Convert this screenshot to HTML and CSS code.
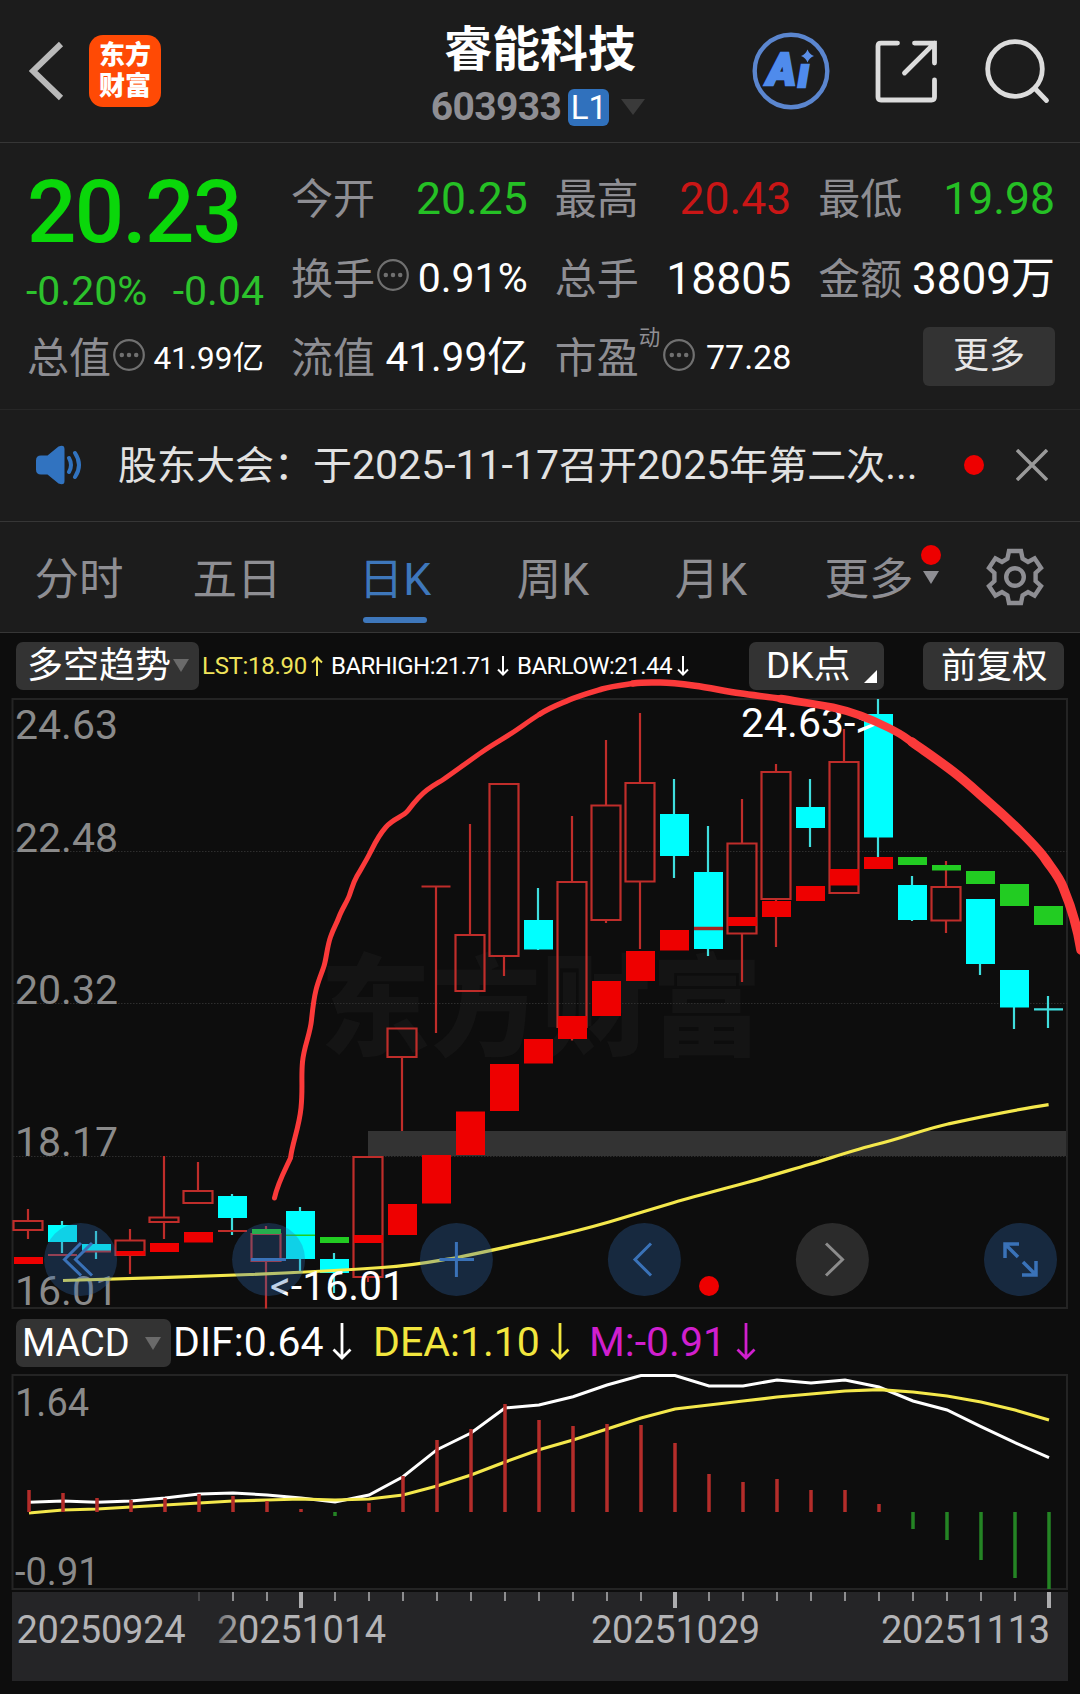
FILE: index.html
```html
<!DOCTYPE html>
<html lang="zh-CN">
<head>
<meta charset="utf-8">
<title>睿能科技 603933</title>
<link rel="stylesheet" href="styles.css">
</head>
<body>
<header class="header">
  <div class="header-left">
    <svg class="back" width="36" height="60" viewBox="0 0 36 60"><path d="M32 3 4 30 32 57"/></svg>
    <div class="logo"><span>东方</span><span>财富</span></div>
  </div>
  <div class="header-title">
    <h1>睿能科技</h1>
    <div class="code-row"><span class="code">603933</span><span class="level">L1</span><svg width="24" height="16" viewBox="0 0 24 16"><path d="M0 0h24L12 16z" fill="#3a3a3a"/></svg></div>
  </div>
  <div class="header-right">
    <svg width="78" height="82" viewBox="752 30 78 82">
      <circle cx="791" cy="71" r="36.300" fill="none" stroke="#5b86cf" stroke-width="4.400"/>
      <text class="ai" x="767" y="84.500">A</text><text class="ai ai-i" x="798" y="87">ı</text>
      <path d="M807.500 49.500q1.800 4.700 6.500 6.500-4.700 1.800-6.500 6.500-1.800-4.700-6.500-6.500 4.700-1.800 6.500-6.500z" fill="#5b8fe8"/>
    </svg>
    <svg class="hicon" width="65" height="65" viewBox="874 38.500 65 65"><path d="M897.500 42.600h-16.500q-3 0-3 3V96.500q0 3 3 3h50.500q3 0 3-3V79.500M914.500 42.600h20V62.500M934.500 42.600 904.500 72.500"/></svg>
    <svg class="hicon" width="66" height="66" viewBox="984 37 66 66"><circle cx="1015" cy="68" r="27.300"/><path d="M1035 87.500l11.500 12"/></svg>
  </div>
</header>

<section class="quote">
  <div class="quote-main">
    <div class="price">20.23</div>
    <div class="change"><span>-0.20%</span><span>-0.04</span></div>
    <div class="cell"><span class="label">总值<svg class="info" width="32" height="32" viewBox="0 0 32 32"><circle cx="16" cy="16" r="14.800"/><path d="M8.800 16h.01M16 16h.01M23.200 16h.01"/></svg></span><span class="value s31">41.99亿</span></div>
  </div>
  <div class="quote-grid">
    <div class="cell"><span class="label">今开</span><span class="value down">20.25</span></div>
    <div class="cell"><span class="label">最高</span><span class="value up">20.43</span></div>
    <div class="cell"><span class="label">最低</span><span class="value down">19.98</span></div>
    <div class="cell"><span class="label">换手<svg class="info" width="32" height="32" viewBox="0 0 32 32"><circle cx="16" cy="16" r="14.800"/><path d="M8.800 16h.01M16 16h.01M23.200 16h.01"/></svg></span><span class="value s42">0.91%</span></div>
    <div class="cell"><span class="label">总手</span><span class="value">18805</span></div>
    <div class="cell"><span class="label">金额</span><span class="value s44">3809万</span></div>
    <div class="cell"><span class="label">流值</span><span class="value s40">41.99亿</span></div>
    <div class="cell"><span class="label">市盈<sup>动</sup><svg class="info" width="32" height="32" viewBox="0 0 32 32"><circle cx="16" cy="16" r="14.800"/><path d="M8.800 16h.01M16 16h.01M23.200 16h.01"/></svg></span><span class="value s34">77.28</span></div>
    <div class="cell cell-more"><button class="more">更多</button></div>
  </div>
</section>

<section class="notice">
  <svg width="48" height="40" viewBox="0 0 48 40"><path d="M5 10.500h6.500L22.500 1.500Q28.500-1 28.500 4v32q0 5-6 2.500L11.500 29.500H5q-5 0-5-5v-9q0-5 5-5z" fill="#3173c0"/><path d="M33 13q4 7 0 14M39 8q8 12 0 24" fill="none" stroke="#3173c0" stroke-width="4" stroke-linecap="round"/></svg>
  <p>股东大会：于<span>2025-11-17</span>召开<span>2025</span>年第二次<span>...</span></p>
  <i class="dot"></i>
  <svg width="32" height="32" viewBox="0 0 32 32"><path d="M1 1l30 30M31 1L1 31" stroke="#999" stroke-width="3.500"/></svg>
</section>

<nav class="tabs">
  <a class="tab">分时</a><a class="tab">五日</a><a class="tab active">日K</a><a class="tab">周K</a><a class="tab">月K</a>
  <a class="tab tab-more">更多<svg width="16" height="13" viewBox="0 0 16 13"><path d="M0 0h16L8 13z" fill="#8e8e93"/></svg><i class="dot"></i></a>
  <svg class="gear" width="58" height="60" viewBox="-29 -30 58 60"><path d="M-6-26H6L7.600-18.300 13-15 19.600-18.700 26-9 20.600-4V4L26 9 19.600 18.700 13 15 7.600 18.300 6 26H-6L-7.600 18.300-13 15-19.600 18.700-26 9-20.600 4V-4L-26-9-19.600-18.700-13-15-7.600-18.300z"/><circle r="8.800"/></svg>
</nav>

<main class="chart">
  <div class="legend">
    <button class="chip chip-trend">多空趋势<svg width="16" height="13" viewBox="0 0 16 13"><path d="M0 0h16L8 13z" fill="#6a6a6a"/></svg></button>
    <span class="ind ind-lst">LST:18.90<svg width="12" height="20" viewBox="0 0 12 20"><path d="M6 20V1.500M1 6.500 6 1.500 11 6.500"/></svg></span>
    <span class="ind ind-high">BARHIGH:21.71<svg width="12" height="20" viewBox="0 0 12 20"><path d="M6 0v18.500M1 13.500l5 5 5-5"/></svg></span>
    <span class="ind ind-low">BARLOW:21.44<svg width="12" height="20" viewBox="0 0 12 20"><path d="M6 0v18.500M1 13.500l5 5 5-5"/></svg></span>
    <button class="chip chip-dk">DK点<svg width="13" height="13" viewBox="0 0 13 13"><path d="M13 0v13H0z" fill="#fff"/></svg></button>
    <button class="chip chip-adj">前复权</button>
  </div>

  <svg class="plot" width="1080" height="626" viewBox="0 690 1080 626">
    <text class="watermark" x="320" y="1047">东方财富</text>
    <path class="frame" d="M12.500 699H1067V1308H12.500z"/>
    <path class="dotted" d="M13 851.500H1067M13 1003.500H1067M13 1156.500H1067"/>
    <path d="M368 1131H1066V1156H368z" fill="#333"/>
    <g class="axis-label"><text x="15" y="739">24.63</text><text x="15" y="852">22.48</text><text x="15" y="1003.500">20.32</text><text x="15" y="1156">18.17</text><text x="15" y="1305">16.01</text></g>
    <path class="rise" d="M28 1209v12M28 1230v9M13.500 1221h29v9h-29z
      M130 1229v11.500M130 1255v19M115.500 1240.500h29v14.500h-29z
      M164 1156v61M164 1222v17M149.500 1217.500h29v4.500h-29z
      M198 1162v29M183.500 1191h29v12h-29z
      M266 1226v8M266 1261v47.500M251.500 1234h29v27h-29z
      M368 1277v5M353.500 1157h29v120h-29z
      M402 1057v74M387.500 1028.500h29v28.500h-29z
      M436 886.500v146.500M421.500 886.500h29
      M470 824v111M455.500 935h29v56h-29z
      M504 956v20M489.500 784h29v172h-29z
      M572 816v66M557.500 882h29v145h-29z
      M606 740v65M606 920v3M591.500 805.500h29v114.500h-29z
      M640 713v70M640 882v67M625.500 783h29v98.500h-29z
      M742 799v44M742 933.500v48.500M727.500 843.500h29v90h-29z
      M776 764v8M776 899v48M761.500 772h29v127h-29z
      M844 729v33M829.500 762h29v131h-29z
      M946 861v26M946 921v12M931.500 887h29v33.500h-29z"/>
    <path class="fall-wick" d="M62 1221v32M96 1231v28M232 1194v41M300 1207v64M334 1253v40M538 888v62M674 779v99M708 826v130M810 779v68M878 699v158M912 876v45M980 899v76M1014 970v59M1048 996v32M1034 1009.300h29"/>
    <path class="fall" d="M48 1225h29v17H48zM82 1244h29v8H82zM218 1196h29v22H218zM286 1211h29v48H286zM320 1259h29v14H320zM524 920h29v29.500H524zM660 814h29v42H660zM694 872h29v77H694zM796 807h29v21H796zM864 714h29v123.500H864zM898 885h29v35H898zM966 899h29v65H966zM1000 970h29v37.500H1000z"/>
    <path class="trend-up" d="M14 1257h29v7H14zM150 1243h29v9H150zM184 1232h29v10.500H184zM116 1251h29v4.500H116zM354 1235h29v8H354zM388 1204h29v31H388zM422 1155h29v48.500H422zM456 1111.500h29v43.500H456zM490 1064h29v47H490zM524 1039h29v24.500H524zM558 1016h29v23H558zM592 981h29v35H592zM626 951h29v30H626zM660 930h29v20.500H660zM728 917h29v9H728zM762 901h29v16H762zM796 886h29v15H796zM830 869h29v16.500H830zM864 857h29v12H864z"/>
    <path class="rise" d="M48 1255h29M82 1251.500h29M218 1231h29M572 1039v1.500"/>
    <path d="M694 928.500h29" stroke="#a82422" stroke-width="3.500"/>
    <path class="trend-down" d="M252 1229h29v5H252zM320 1237h29v6H320zM286 1234.500h29v1.500H286zM898 857h29v8H898zM932 865h29v5.500H932zM966 871h29v13H966zM1000 884h29v22H1000zM1034 906h29v19H1034z"/>
    <path class="line-yellow" d="M63 1280.500C120 1279 190 1277 250 1274.500S345 1270 382 1267.500 440 1260 457 1257.500C490 1251 520 1244 540 1239.500S590 1227.500 609 1222 655 1208 674 1202.500 725 1188.500 747 1182.500 790 1170 809 1164.500 855 1149.500 878 1144 925 1129 948 1124 1010 1110.500 1048.600 1104.700"/>
    <text class="mark" x="741" y="737">24.63-&gt;</text>
    <text class="mark" x="270" y="1300">&lt;-16.01</text>
    <g class="pad"><circle cx="80.600" cy="1259.500" r="36.500"/><circle cx="268.600" cy="1259.500" r="36.500"/><circle cx="456.400" cy="1259.500" r="36.500"/><circle cx="644.400" cy="1259.500" r="36.500"/><circle class="pad-off" cx="832.400" cy="1259.500" r="36.500"/><circle cx="1020.500" cy="1259.500" r="36.500"/></g>
    <g class="pad-icon">
      <path d="M81 1243 64.500 1259.500 81 1275.500M92 1243 75.500 1259.500 92 1275.500M251 1259.500h35M439.500 1259.500h34.500M456.400 1242v35M651 1243.500 635 1259.500 651 1275.500"/>
      <path class="pad-icon-off" d="M826 1243.500 842.500 1259.500 826 1275.500"/>
      <path class="expand" d="M1005 1258v-14h14M1005 1244l13 13M1036 1261v14h-14M1036 1275l-13-13"/>
    </g>
    <circle cx="709" cy="1286" r="10" fill="#e00"/>
    <g class="sketch">
      <path stroke-width="5" d="M274.500 1198C278 1182 286 1168 290.500 1158 292.500 1142 299 1128 301 1108S301 1078 302.500 1062 310 1035 311.500 1020 313.500 1000 316 990 321.500 974 324 966 327 947 330.500 937 336 925 339 917 347 902 349.500 895 353 883 357 876 366 861 370 853 378 836 386 827 403 817 408 810.500 419 796 427 790 438 783 444 779 469 761 482 752 505 738 516.500 730 532 719 540 714"/>
      <path stroke-width="5.500" d="M540 714C551 707 560 704 569 700S592 692 602 689 622 685 633 683.500"/>
      <path stroke-width="6.500" d="M633 683.500C643 682 651 682.500 660.500 682.500S682 684 695 685.800 725 691 740 693.300 767 696.500 781 698.800"/>
      <path stroke-width="8" d="M781 698.800C800 702 817 704 833 707.500S870 718.500 888 727.500 904 737 912 742"/>
      <path stroke-width="9.500" d="M912 742C926 752 938 760 953 771.500S977 792 988 801.500 1014 825 1022 833 1040 851 1046 860 1058 875 1063 887 1077 925 1081 950"/>
    </g>
  </svg>

  <div class="legend macd-legend">
    <button class="chip chip-macd">MACD<svg width="16" height="13" viewBox="0 0 16 13"><path d="M0 0h16L8 13z" fill="#6a6a6a"/></svg></button>
    <span class="macd-val dif">DIF:0.64<svg width="20" height="38" viewBox="0 0 20 38"><path d="M10 0v35M1.500 26.500 10 35l8.500-8.500"/></svg></span>
    <span class="macd-val dea">DEA:1.10<svg width="20" height="38" viewBox="0 0 20 38"><path d="M10 0v35M1.500 26.500 10 35l8.500-8.500"/></svg></span>
    <span class="macd-val m">M:-0.91<svg width="20" height="38" viewBox="0 0 20 38"><path d="M10 0v35M1.500 26.500 10 35l8.500-8.500"/></svg></span>
  </div>

  <svg class="plot" width="1080" height="322" viewBox="0 1372 1080 322">
    <defs><linearGradient id="fade" gradientUnits="userSpaceOnUse" x1="216" x2="244" y1="0" y2="0"><stop offset="0" stop-color="#6e6e70"/><stop offset="1" stop-color="#b4b4b6"/></linearGradient></defs>
    <path class="frame" d="M12.500 1375H1067V1589H12.500z"/>
    <g class="axis-label axis-small"><text x="15" y="1416">1.64</text><text x="15" y="1585">-0.91</text></g>
    <path class="line-white" d="M29 1502.300 63 1501 97 1502.300 131 1501 165 1498 199 1494 233 1493 267 1495 301 1498 335 1502 369 1495 403 1476.700 437 1449.700 471 1433 505 1408 539 1405 573 1396.700 607 1385 641 1375.500 675 1375.500 709 1386 743 1386 777 1380 811 1383 845 1380 879 1387 913 1401 947 1410 981 1426.700 1015 1442.700 1049 1457.700"/>
    <path class="line-yellow" d="M29 1513 63 1510 97 1509 131 1507 165 1505 199 1503 233 1501 267 1500 301 1499 335 1500 369 1499 403 1495 437 1486 471 1475 505 1462 539 1449.700 573 1440 607 1429 641 1418 675 1409 709 1405 743 1401 777 1397 811 1394 845 1391 879 1389.700 913 1392 947 1396 981 1402 1015 1410 1049 1420"/>
    <path class="hist-up" d="M29 1512V1490M63 1512V1493M97 1512V1498M131 1512V1500M165 1512V1498M199 1512V1494M233 1512V1496M267 1512V1501M301 1512V1509M369 1512V1503M403 1512V1476M437 1512V1440M471 1512V1429M505 1512V1404M539 1512V1420M573 1512V1426M607 1512V1424M641 1512V1425M675 1512V1443M709 1512V1474M743 1512V1482M777 1512V1479M811 1512V1490M845 1512V1490M879 1512V1504"/>
    <path class="hist-down" d="M335 1512v4M913 1512v17M947 1512v28M981 1512v48M1015 1512v66M1049 1512v77"/>
    <path d="M12 1592H1068V1681H12z" fill="#252527"/>
    <path d="M199 1592v9" stroke="#4a4a4c" stroke-width="2"/>
    <path d="M233 1592v9M267 1592v9M335 1592v9M369 1592v9M403 1592v9M437 1592v9M471 1592v9M505 1592v9M539 1592v9M573 1592v9M607 1592v9M641 1592v9M709 1592v9M743 1592v9M777 1592v9M811 1592v9M845 1592v9M879 1592v9M913 1592v9M947 1592v9M981 1592v9M1015 1592v9" stroke="#8d8d8f" stroke-width="2"/>
    <path d="M301 1592v16M675 1592v16M1049 1592v16" stroke="#acacae" stroke-width="4"/>
    <g class="date"><text x="16.500" y="1643">20250924</text><text x="217" y="1643" fill="url(#fade)">20251014</text><text x="591" y="1643">20251029</text><text x="881" y="1643">20251113</text></g>
  </svg>
</main>
</body>
</html>
```
FILE: styles.css
```css
* { box-sizing: border-box; }
body { margin: 0; width: 1080px; background: #1c1c1c; color: #fff; font-family: Roboto, "Noto Sans CJK SC", sans-serif; overflow: hidden; }
svg { display: block; flex: none; }
button { font: inherit; color: inherit; border: 0; padding: 0; margin: 0; }
.dot { display: block; flex: none; width: 20px; height: 20px; border-radius: 50%; background: #e00; }

/* header */
.header { height: 143px; border-bottom: 1px solid #363636; display: grid; grid-template-columns: 1fr auto 1fr; }
.header-left { display: flex; align-items: center; gap: 24px; padding-left: 29px; }
.back path { fill: none; stroke: #b9b9b9; stroke-width: 6; }
.logo { width: 72px; height: 72px; border-radius: 14px; background: #ff4a05; display: flex; flex-direction: column; align-items: center; justify-content: center; font-size: 26px; line-height: 31px; font-weight: 900; }
.header-title { display: flex; flex-direction: column; align-items: center; padding-top: 22px; }
h1 { margin: 0 0 9px; font-size: 48px; line-height: 56px; font-weight: 700; }
.code-row { display: flex; align-items: center; height: 40px; padding-right: 4px; }
.code { font-size: 39px; line-height: 40px; font-weight: 700; letter-spacing: -.600px; color: #8e8e93; }
.level { width: 41px; height: 37px; border-radius: 6px; background: #3071bd; margin: 0 12px 0 7px; font-size: 33px; line-height: 37px; text-align: center; }
.header-right { display: flex; align-items: center; justify-content: flex-end; gap: 45.500px; padding-right: 30px; }
.header-right svg:first-child { margin-right: -2px; }
.ai { font: italic 900 44px Roboto, sans-serif; fill: #4f8bec; stroke: #4f8bec; stroke-width: 2.500; }
.ai-i { font-size: 40px; }
.hicon { fill: none; stroke: #dcdcdc; stroke-width: 4.800; stroke-linecap: round; }

/* quote */
.quote { height: 267px; border-bottom: 1px solid #272727; padding: 17px 25px 0 27px; display: flex; gap: 27px; }
.quote-main { width: 237px; }
.price { font-size: 87px; line-height: 100px; padding-top: 2px; height: 103px; font-weight: 500; letter-spacing: -1.700px; color: #0ad70a; }
.change { display: flex; justify-content: space-between; font-size: 41px; line-height: 56px; height: 56px; color: #2cc22c; margin-left: -1px; }
.quote-grid { flex: 1; display: grid; grid-template-columns: repeat(3, 1fr); grid-auto-rows: 79.500px; column-gap: 27px; }
.cell { display: flex; justify-content: space-between; align-items: baseline; height: 79.500px; line-height: 79.500px; white-space: nowrap; }
.label { font-size: 42px; color: #8e8e93; display: flex; }
.info { margin: 19.500px 0 0 2px; fill: none; stroke: #707070; stroke-width: 2.200; }
.info path { stroke-width: 4.500; stroke-linecap: round; }
.label sup { font-size: 21.500px; line-height: 38px; }
.label sup + .info { margin-left: 3px; }
.value { font-size: 44.500px; }
.s31 { font-size: 31.500px; padding-bottom: 0; align-self: center; line-height: 60px; }
.s34 { font-size: 34px; padding-bottom: 3px; align-self: center; line-height: 60px; }
.s40 { font-size: 40.500px; padding-bottom: 2px; align-self: center; line-height: 79.500px; }
.s42 { font-size: 41px; padding-bottom: 2px; align-self: center; line-height: 79.500px; }
.s44 { font-size: 44px; }
.down { color: #25c025; }
.up { color: #c91616; }
.cell-more { justify-content: flex-end; align-items: center; }
.more { width: 132px; height: 59px; border-radius: 6px; background: #333; color: #e6e6e6; font-size: 36px; line-height: 56px; margin-bottom: 5px; }

/* notice */
.notice { height: 112px; border-bottom: 1px solid #363636; display: flex; align-items: center; padding: 0 32px 2px 36px; }
.notice p { margin: 2px 0 0 34px; flex: 1; font-size: 39px; line-height: 60px; color: #e2e2e2; white-space: nowrap; }
.notice p span { font-size: 41px; }
.notice .dot { margin-right: 32px; }

/* tabs */
.tabs { height: 111px; border-bottom: 1px solid #363636; display: flex; align-items: center; padding-left: 1px; }
.tab { width: 158px; height: 110px; padding: 8px 2px 0 0; font-size: 44.500px; line-height: 101px; text-align: center; color: #8e8e93; position: relative; }
.active { color: #3e77bb; }
.active::after { content: ""; position: absolute; left: 46px; bottom: 9px; width: 64px; height: 6px; border-radius: 3px; background: #3e77bb; }
.tab-more svg { position: absolute; left: 132px; top: 49px; }
.tab-more .dot { position: absolute; left: 130px; top: 23px; }
.gear { margin-left: 37px; fill: none; stroke: #8e8e93; stroke-width: 4.400; }

/* chart */
.chart { background: #0d0d0d; height: 1061px; }
.legend { height: 57px; display: flex; align-items: center; padding: 0 16px; white-space: nowrap; }
.chip { height: 48px; border-radius: 7px; background: #333; display: flex; align-items: center; position: relative; top: 4px; font-size: 35.500px; line-height: 50px; flex: none; }
.chip-trend { width: 183px; padding-left: 11px; font-size: 36px; }
.chip-trend svg { margin-left: 2px; }
.ind { font-size: 24px; display: flex; align-items: center; gap: 5px; padding-top: 8px; letter-spacing: -.550px; }
.ind svg, .macd-val svg { fill: none; stroke: currentColor; stroke-width: 2; }
.ind-lst { margin-left: 3px; width: 129px; color: #f0e35a; letter-spacing: -.300px; gap: 4px; }
.ind-high { width: 186px; }
.ind-low { width: 232px; }
.chip-dk { width: 135px; padding-left: 17px; font-size: 37px; }
.chip-dk svg { position: absolute; right: 7px; bottom: 7px; }
.chip-adj { width: 141px; margin-left: auto; padding-left: 18px; }
.plot { overflow: visible; }
.frame { fill: none; stroke: #242424; stroke-width: 2; }
.dotted { stroke: #2e2e2e; stroke-width: 1; stroke-dasharray: 1.500 1.500; }
.watermark { font: 900 110.500px "Noto Sans CJK SC", sans-serif; fill: #141414; }
.axis-label { font-size: 41px; fill: #8a8a8a; }
.axis-small { font-size: 38px; }
.mark { font-size: 41px; fill: #fff; }
.rise { fill: none; stroke: #bf2d2a; stroke-width: 2.200; }
.fall-wick { fill: none; stroke: #3fdede; stroke-width: 2.200; }
.fall { fill: #0ff; }
.trend-up { fill: #e00; }
.trend-down { fill: #22cc22; }
.line-yellow { fill: none; stroke: #f4e84c; stroke-width: 3.200; }
.line-white { fill: none; stroke: #fff; stroke-width: 3; }
.pad { fill: rgba(48, 106, 177, .31); }
.pad-off { fill: rgba(112, 112, 112, .31); }
.pad-icon { fill: none; stroke: #3a72b8; stroke-width: 3; }
.pad-icon-off { stroke: #8c8c8c; }
.expand { stroke-width: 3.500; }
.sketch { fill: none; stroke: #fb3a3a; stroke-linecap: round; stroke-linejoin: round; }

.macd-legend { height: 56px; }
.chip-macd { width: 155px; top: -1px; padding-left: 6px; font-size: 38px; }
.chip-macd svg { margin-left: auto; margin-right: 10px; }
.macd-val { font-size: 41px; display: flex; align-items: center; gap: 8px; padding-bottom: 4px; }
.macd-val svg { stroke-width: 2.800; }
.dif { width: 200px; margin-left: 2px; }
.dea { width: 216px; gap: 10px; color: #f2e63e; }
.m { color: #d01fce; gap: 10px; }
.hist-up { stroke: #b42d2a; stroke-width: 3.500; }
.hist-down { stroke: #248424; stroke-width: 3.500; }
.date { font-size: 38px; letter-spacing: -.250px; fill: #b4b4b6; }
```
